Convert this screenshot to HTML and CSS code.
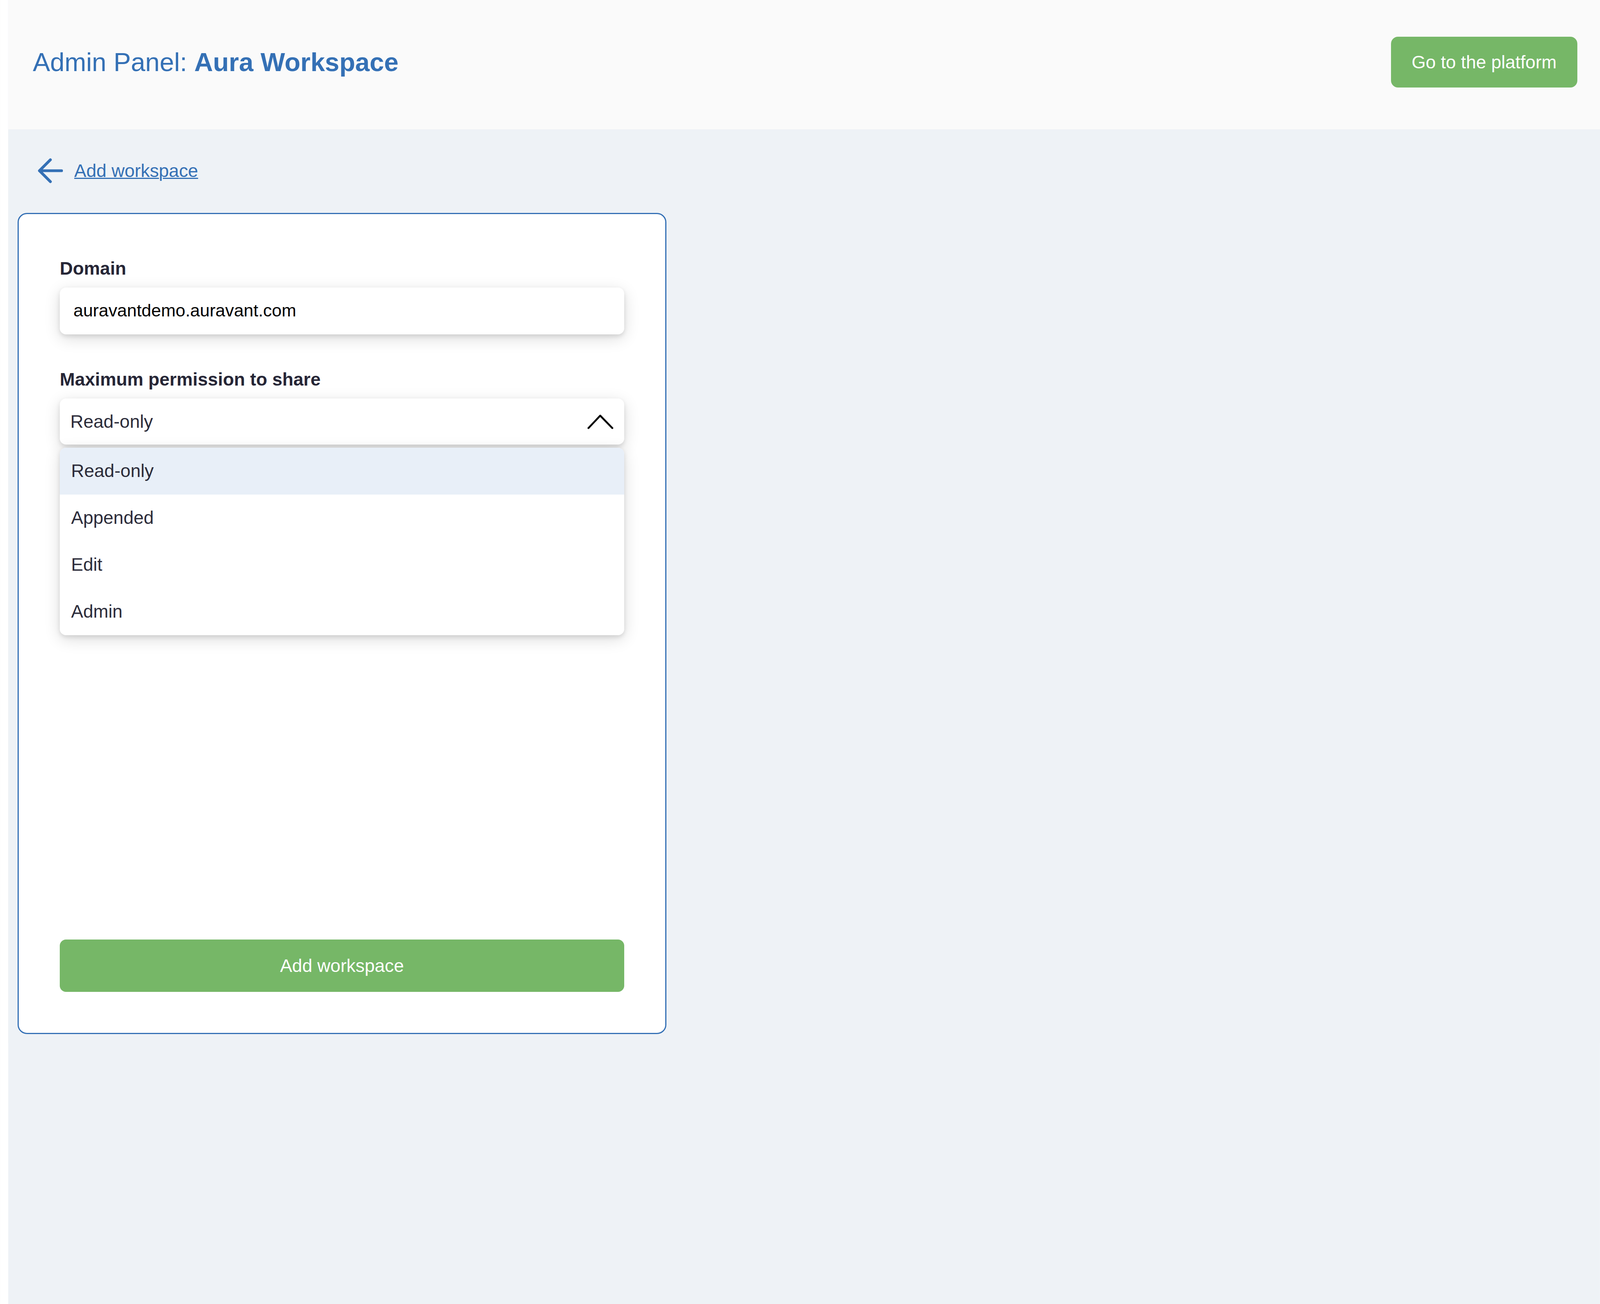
FILE: index.html
```html
<!DOCTYPE html>
<html lang="en">
<head>
  <meta charset="UTF-8">
  <meta name="viewport" content="width=device-width, initial-scale=1.0">
  <title>Admin Panel: Aura Workspace</title>
  <link rel="stylesheet" href="styles.css">
</head>
<body>
  <div class="page">
    <header class="topbar">
      <h1 class="topbar__title">Admin Panel: <b>Aura Workspace</b></h1>
      <button class="button topbar__button">Go to the platform</button>
    </header>

    <main class="content">
      <div class="back-link">
        <svg class="back-link__icon" viewBox="0 0 80 80" width="64" height="64">
          <path d="M76 40H5 M40 5L5 40L40 75" fill="none" stroke="#3470b5" stroke-width="9" stroke-linecap="round" stroke-linejoin="round"/>
        </svg>
        <a class="back-link__text" href="#">Add workspace</a>
      </div>

      <form class="card">
        <div class="form-group">
          <label class="form-group__label">Domain</label>
          <div class="field">auravantdemo.auravant.com</div>
        </div>

        <div class="form-group form-group--spaced">
          <label class="form-group__label">Maximum permission to share</label>
          <div class="select">
            <div class="select__head">
              <span>Read-only</span>
              <svg class="select__chevron" viewBox="0 0 85 49" width="68" height="39">
                <polyline points="4,45 42,5 81,45" fill="none" stroke="#000" stroke-width="6" stroke-linecap="round" stroke-linejoin="round"/>
              </svg>
            </div>
            <ul class="select__list">
              <li class="select__option select__option--active">Read-only</li>
              <li class="select__option">Appended</li>
              <li class="select__option">Edit</li>
              <li class="select__option">Admin</li>
            </ul>
          </div>
        </div>

        <button class="button card__submit" type="button">Add workspace</button>
      </form>
    </main>
  </div>
</body>
</html>
```

FILE: styles.css
```css
body {
  margin: 0;
  font-family: "Liberation Sans", Arial, Helvetica, sans-serif;
  /* white strip on the left, app background elsewhere */
  background: linear-gradient(to right, #FFFFFF 21px, #EEF2F6 21px);
}

.page {
  margin-left: 21px;
  padding-bottom: 23px;
  background-color: #EEF2F6;
}

.topbar {
  box-sizing: border-box;
  height: 331px;
  padding: 0 58px 14px 63px;
  display: flex;
  align-items: center;
  justify-content: space-between;
  background-color: #FAFAFA;
}

.topbar__title {
  margin: 0;
  font-size: 66.4px;
  font-weight: normal;
  color: #3470B5;
}

.button {
  border: none;
  color: #FFFFFF;
  font-family: inherit;
  font-size: 46.4px;
  background-color: #76B767;
  cursor: pointer;
}

.topbar__button {
  height: 130px;
  padding: 0 53px;
  border-radius: 18px;
}

.content {
  padding: 74px 0 0 24px;
}

.back-link {
  height: 64px;
  margin-left: 52px;
  display: flex;
  align-items: center;
  gap: 29px;
}

.back-link__icon {
  display: block;
}

.back-link__text {
  font-size: 46.4px;
  color: #3470B5;
  text-decoration: underline;
  text-decoration-thickness: 3px;
}

.card {
  box-sizing: border-box;
  width: 1661px;
  height: 2102px;
  margin: 76px 0 0;
  padding: 112px 105px 105px;
  border: 3px solid #3470B5;
  border-radius: 24px;
  display: flex;
  flex-direction: column;
  background-color: #FFFFFF;
}

.form-group {
  display: flex;
  flex-direction: column;
  gap: 22px;
}

.form-group--spaced {
  margin-top: 88px;
}

.form-group__label {
  font-size: 46.4px;
  font-weight: bold;
  color: #262636;
}

.field {
  box-sizing: border-box;
  height: 120px;
  padding: 0 35px 4px;
  display: flex;
  align-items: center;
  border-radius: 16px;
  font-size: 44.8px;
  color: #000000;
  background-color: #FFFFFF;
  box-shadow: 0 5px 12px rgba(0, 0, 0, 0.11), 0 10px 40px rgba(0, 0, 0, 0.14);
}

.select {
  position: relative;
}

.select__head {
  box-sizing: border-box;
  height: 118px;
  padding: 0 27px;
  display: flex;
  align-items: center;
  justify-content: space-between;
  border-radius: 16px;
  font-size: 46.4px;
  color: #2C2C3A;
  background-color: #FFFFFF;
  box-shadow: 0 5px 12px rgba(0, 0, 0, 0.11), 0 10px 40px rgba(0, 0, 0, 0.14);
}

.select__chevron {
  display: block;
}

.select__list {
  position: absolute;
  top: 126px;
  left: 0;
  right: 0;
  margin: 0;
  padding: 0;
  list-style: none;
  overflow: hidden;
  border-radius: 16px;
  background-color: #FFFFFF;
  box-shadow: 0 5px 12px rgba(0, 0, 0, 0.11), 0 10px 40px rgba(0, 0, 0, 0.14);
}

.select__option {
  box-sizing: border-box;
  height: 120px;
  padding: 0 29px 3px;
  display: flex;
  align-items: center;
  font-size: 46.4px;
  color: #2C2C3A;
}

.select__option--active {
  background-color: #E8EFF8;
}

.card__submit {
  height: 134px;
  margin-top: auto;
  border-radius: 16px;
}
```
